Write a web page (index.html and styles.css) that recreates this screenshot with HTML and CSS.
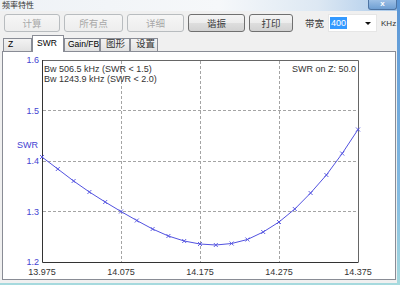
FILE: index.html
```html
<!DOCTYPE html>
<html lang="zh-CN">
<head>
    <meta charset="UTF-8">
    <title>频率特性</title>
    <link rel="stylesheet" href="styles.css">
</head>
<body>
    <div class="window">
        <div class="titlebar">
            <span class="title">频率特性</span>
            <span class="close">x</span>
        </div>
        <div class="client">
            <div class="toolbar">
                <button class="btn btn-calc" disabled>计算</button>
                <button class="btn btn-all" disabled>所有点</button>
                <button class="btn btn-detail" disabled>详细</button>
                <button class="btn btn-res">谐振</button>
                <button class="btn btn-print">打印</button>
                <span class="label">带宽</span>
                <div class="combo"><span class="sel">400</span><span class="arrow"></span></div>
                <span class="unit">KHz</span>
            </div>
            <div class="tabs">
                <div class="tab tab-z">Z</div>
                <div class="tab tab-swr active">SWR</div>
                <div class="tab tab-gain">Gain/FB</div>
                <div class="tab tab-graph cjk">图形</div>
                <div class="tab tab-set cjk">设置</div>
            </div>
            <div class="panel">
                <svg class="chart" width="392" height="227" viewBox="3 52 392 227">
                    <!-- grid -->
                    <path class="grid" d="M43 110.5H358M43 161.5H358M43 211.5H358M121.5 61V262M200.5 61V262M279.5 61V262"/>
                    <!-- frame -->
                    <path class="frame-light" d="M42.5 60.5H358.5V262"/>
                    <path class="frame" d="M42.5 60V262.5H358.5"/>

                    <text class="ylab" x="39" y="62.5" text-anchor="end">1.6</text>
                    <text class="ylab" x="39" y="113.5" text-anchor="end">1.5</text>
                    <text class="ylab" x="39" y="164" text-anchor="end">1.4</text>
                    <text class="ylab" x="39" y="214.5" text-anchor="end">1.3</text>
                    <text class="ylab" x="39" y="265" text-anchor="end">1.2</text>
                    <text class="ylab" x="17" y="148">SWR</text>

                    <text class="xlab" x="42" y="275" text-anchor="middle">13.975</text>
                    <text class="xlab" x="121" y="275" text-anchor="middle">14.075</text>
                    <text class="xlab" x="200" y="275" text-anchor="middle">14.175</text>
                    <text class="xlab" x="279" y="275" text-anchor="middle">14.275</text>
                    <text class="xlab" x="358" y="275" text-anchor="middle">14.375</text>

                    <text class="note" x="44" y="71.5">Bw 506.5 kHz (SWR &lt; 1.5)</text>
                    <text class="note" x="44" y="82">Bw 1243.9 kHz (SWR &lt; 2.0)</text>
                    <text class="note" x="356" y="71.5" text-anchor="end">SWR on Z: 50.0</text>

                    <!-- swr curve -->
                    <polyline class="curve" points="42,157 57.8,169 73.6,181 89.4,192 105.2,202 121,211.5 136.8,220.5 152.6,229 168.4,236 184.2,241 200,244 215.8,245 231.6,243.5 247.4,239.5 263.2,232 279,222 294.8,209 310.6,193 326.4,175 342.2,153.5 358,129.5"/>
                    <path class="marks" d="M40 155l4 4m0-4l-4 4M55.8 167l4 4m0-4l-4 4M71.6 179l4 4m0-4l-4 4M87.4 190l4 4m0-4l-4 4M103.2 200l4 4m0-4l-4 4M119 209.5l4 4m0-4l-4 4M134.8 218.5l4 4m0-4l-4 4M150.6 227l4 4m0-4l-4 4M166.4 234l4 4m0-4l-4 4M182.2 239l4 4m0-4l-4 4M198 242l4 4m0-4l-4 4M213.8 243l4 4m0-4l-4 4M229.6 241.5l4 4m0-4l-4 4M245.4 237.5l4 4m0-4l-4 4M261.2 230l4 4m0-4l-4 4M277 220l4 4m0-4l-4 4M292.8 207l4 4m0-4l-4 4M308.6 191l4 4m0-4l-4 4M324.4 173l4 4m0-4l-4 4M340.2 151.5l4 4m0-4l-4 4M356 127.5l4 4m0-4l-4 4"/>
                </svg>
            </div>
        </div>
    </div>
</body>
</html>
```

FILE: styles.css
```css
* {
    box-sizing: border-box;
}
body {
    margin: 0;
    width: 400px;
    height: 285px;
    overflow: hidden;
    font-family: 'Liberation Sans', 'Noto Sans CJK SC', sans-serif;
    background: linear-gradient(#5a95d5, #86bde2 70%, #a6dade);
}
.window {
    width: 397px;
}
.titlebar {
    height: 11px;
    display: flex;
    justify-content: space-between;
    background: linear-gradient(to right, #eef2f6, #f6f8fa 55%, #dde8f3 80%, #a9c9ea);
}
.title {
    font-size: 8px;
    line-height: 11px;
    padding-left: 2px;
    color: #333;
}
.close {
    width: 29px;
    height: 10px;
    background: linear-gradient(#9dc0e6, #6f9fd3);
    border: 1px solid #4d74a3;
    border-top: none;
    border-radius: 0 0 3px 3px;
    color: #fff;
    font-size: 8px;
    font-weight: bold;
    line-height: 8px;
    text-align: center;
}
.client {
    height: 272px;
    padding: 3px 0;
    background-color: #f0f0f0;
}
.toolbar {
    display: flex;
    align-items: center;
    gap: 4px;
    height: 18px;
    padding-left: 4px;
}
.btn {
    height: 18px;
    padding: 0;
    font-family: inherit;
    font-size: 9.5px;
    color: #3a3a3a;
    border: 1px solid #707070;
    border-radius: 3px;
    background: linear-gradient(#f4f4f4 0%, #ececec 50%, #dedede 51%, #d2d2d2 100%);
}
.btn:disabled {
    color: #a8a8a8;
    border-color: #b8bcbf;
    background: linear-gradient(#f6f6f6, #ededed);
}
.btn-calc { width: 56px; }
.btn-all { width: 59px; }
.btn-detail { width: 57px; }
.btn-res { width: 57px; }
.btn-print { width: 44px; }
.label {
    margin-left: 8px;
    font-size: 9.5px;
    color: #3a3a3a;
}
.combo {
    width: 49px;
    height: 18px;
    display: flex;
    align-items: center;
    justify-content: space-between;
    padding: 0 5px 0 1px;
    background-color: #fff;
    border: 1px solid #e6e6e6;
}
.sel {
    background-color: #3399ff;
    color: #fff;
    font-size: 9px;
    line-height: 12px;
    padding: 0 1px;
}
.arrow {
    width: 0;
    height: 0;
    border-left: 3px solid transparent;
    border-right: 3px solid transparent;
    border-top: 3px solid #111;
}
.unit {
    font-size: 8px;
    color: #333;
}
.tabs {
    display: flex;
    align-items: flex-end;
    height: 16px;
    margin-top: 3px;
    padding-left: 3px;
}
.tab {
    height: 13px;
    padding-left: 4px;
    border: 1px solid #898c95;
    border-bottom: none;
    background: linear-gradient(#f3f3f3, #e2e2e2);
    font-size: 8.5px;
    line-height: 10px;
    color: #000;
}
.tab.cjk {
    padding-left: 5px;
    font-size: 9.5px;
    color: #333;
}
.tab.active {
    height: 17px;
    margin-bottom: -1px;
    line-height: 15px;
    background: #fff;
    position: relative;
    z-index: 1;
}
.tab-z { width: 29px; }
.tab-swr { width: 32px; }
.tab-gain { width: 36px; padding-left: 3px; }
.tab-graph { width: 30px; }
.tab-set { width: 28px; }
.panel {
    width: 394px;
    height: 229px;
    margin-left: 2px;
    border: 1px solid #898c95;
    background-color: #fff;
}
.chart {
    display: block;
}
.grid {
    fill: none;
    stroke: #a4a4a4;
    stroke-width: 1;
    stroke-dasharray: 3 2;
}
.frame {
    fill: none;
    stroke: #333;
}
.frame-light {
    fill: none;
    stroke: #666;
}
.ylab {
    fill: #4343d2;
    font-size: 9px;
}
.xlab {
    fill: #333;
    font-size: 9px;
}
.note {
    fill: #333;
    font-size: 9px;
}
.curve {
    fill: none;
    stroke: #5252e0;
    stroke-width: 1;
}
.marks {
    fill: none;
    stroke: #5252e0;
    stroke-width: 0.9;
}
```
